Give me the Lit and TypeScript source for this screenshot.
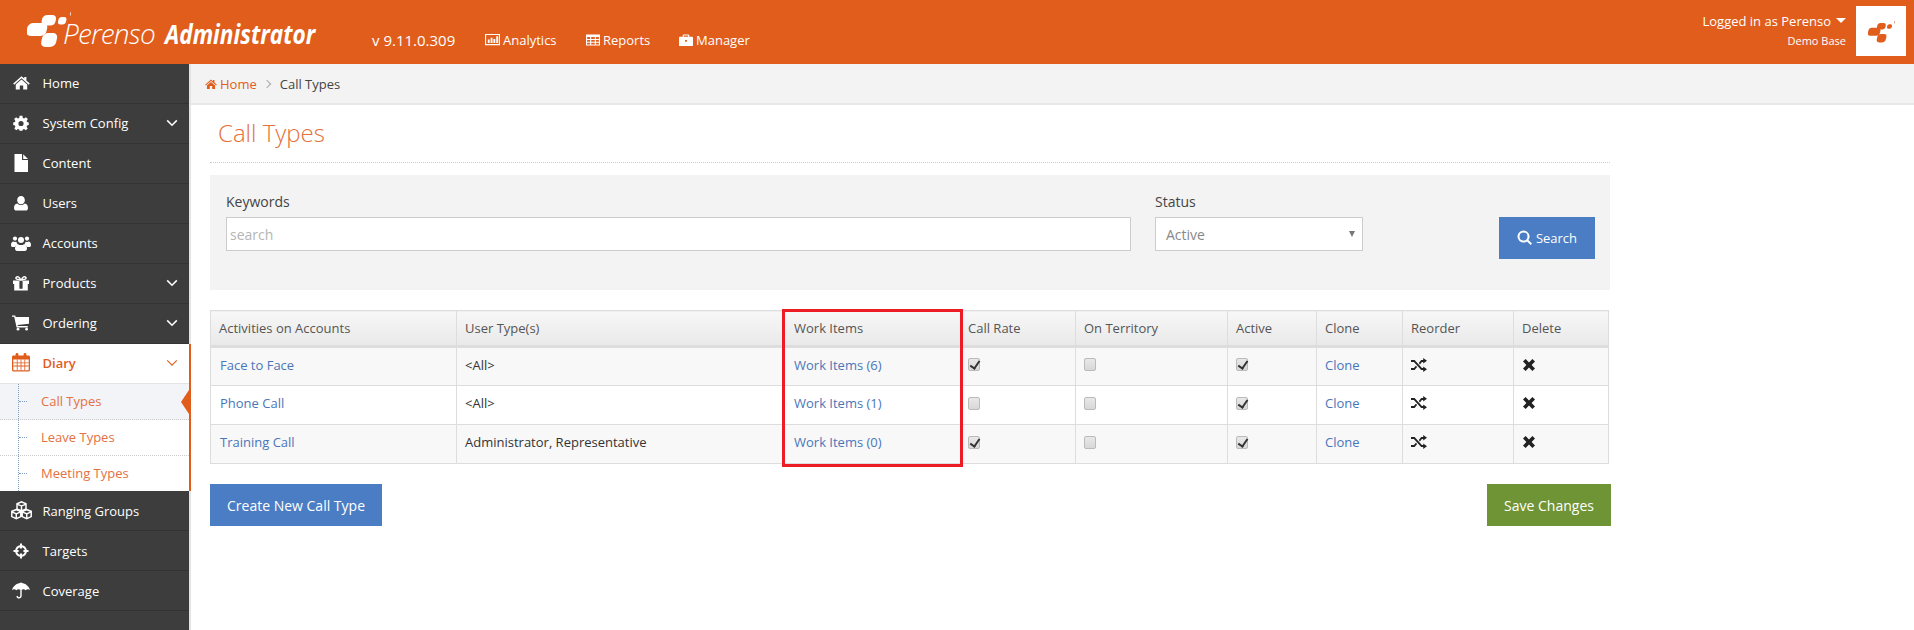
import { LitElement, html, css, svg } from "lit";
import { customElement } from "lit/decorators.js";

const icons: Record<string, any> = {
  home: svg`<path d="M8 2 L10.6 4.3 V2.8 H12.6 V6.1 L15.8 9 L14.9 10 L8 4 L1.1 10 L.2 9 Z"/><path d="M8 5.2 L13.4 9.9 V14.6 H9.6 V10.8 H6.4 V14.6 H2.6 V9.9 Z"/>`,
  cog: svg`<path fill-rule="evenodd" d="M6.6 .8 H9.4 L9.8 2.9 L11.1 3.4 L12.9 2.2 L14.8 4.1 L13.6 5.9 L14.1 7.1 L15.8 7.5 V10 L14.1 10.4 L13.6 11.7 L14.7 13.4 L12.8 15.2 L11.1 14.1 L9.8 14.6 L9.4 15.8 H6.6 L6.2 14.6 L4.9 14.1 L3.2 15.2 L1.3 13.4 L2.4 11.7 L1.9 10.4 L.2 10 V7.5 L1.9 7.1 L2.4 5.9 L1.2 4.1 L3.1 2.2 L4.9 3.4 L6.2 2.9 Z M8 5.9 A2.6 2.6 0 1 0 8 11.1 A2.6 2.6 0 1 0 8 5.9 Z"/>`,
  file: svg`<path d="M1.5 0 H9 V6 H15 V18 H1.5 Z"/><path d="M10.2 .2 L15 5 H10.2 Z"/>`,
  user: svg`<path d="M8 1 C10.4 1 11.8 3 11.8 5.2 C11.8 7.4 10.4 9.2 8 9.2 C5.6 9.2 4.2 7.4 4.2 5.2 C4.2 3 5.6 1 8 1 Z"/><path d="M4.4 8.6 C5.4 9.6 6.6 10.1 8 10.1 C9.4 10.1 10.6 9.6 11.6 8.6 C13.8 8.8 15 10.4 15 13 C15 14.6 14 15.6 12.6 15.6 H3.4 C2 15.6 1 14.6 1 13 C1 10.4 2.2 8.8 4.4 8.6 Z"/>`,
  users: svg`<circle cx="4" cy="3.6" r="2.1"/><circle cx="16" cy="3.6" r="2.1"/><circle cx="10" cy="5" r="3"/><path d="M0 10 C0 7.6 1 6.4 2.6 6.4 C3.4 7 4.4 7.1 5.4 6.8 C5.6 8 6.2 9 7 9.4 C5.4 9.8 4.4 10.7 4 12 H1.4 C.5 12 0 11.2 0 10 Z"/><path d="M20 10 C20 7.6 19 6.4 17.4 6.4 C16.6 7 15.6 7.1 14.6 6.8 C14.4 8 13.8 9 13 9.4 C14.6 9.8 15.6 10.7 16 12 H18.6 C19.5 12 20 11.2 20 10 Z"/><path d="M7 9.2 C8.7 10.4 11.3 10.4 13 9.2 C15 9.4 16 11 16 13.6 C16 15.2 15.1 16 14 16 H6 C4.9 16 4 15.2 4 13.6 C4 11 5 9.4 7 9.2 Z"/>`,
  gift: svg`<path fill-rule="evenodd" d="M0 5.4 H6.2 V3.9 H9.8 V5.4 H16 V9 H14.8 V15.6 H1.2 V9 H0 Z M6.4 9 V13.8 H9.6 V5.8 H6.4 Z"/><path fill-rule="evenodd" d="M4.6 .9 C6 .9 7.2 2.2 8 4 C8.8 2.2 10 .9 11.4 .9 C13 .9 13.8 1.9 13.8 3 C13.8 4.2 12.8 5 11.6 5 H4.4 C3.2 5 2.2 4.2 2.2 3 C2.2 1.9 3 .9 4.6 .9 Z M4.7 2.4 C4 2.4 3.7 2.7 3.7 3.1 C3.7 3.5 4 3.8 4.6 3.8 H6.4 C5.9 3 5.3 2.4 4.7 2.4 Z M11.3 2.4 C10.7 2.4 10.1 3 9.6 3.8 H11.4 C12 3.8 12.3 3.5 12.3 3.1 C12.3 2.7 12 2.4 11.3 2.4 Z"/>`,
  cart: svg`<path d="M0 1.4 H3.2 L3.7 3 H17 V9.8 L5.6 11 L5.8 12 H15.8 V13.4 H4.6 L2.2 2.8 H0 Z"/><circle cx="6" cy="15.2" r="1.4"/><circle cx="14.6" cy="15.2" r="1.4"/>`,
  calendar: svg`<path fill-rule="evenodd" d="M1.5 2.6 H3.6 V1.4 C3.6 .6 4.2 0 5 0 C5.8 0 6.4 .6 6.4 1.4 V2.6 H11.6 V1.4 C11.6 .6 12.2 0 13 0 C13.8 0 14.4 .6 14.4 1.4 V2.6 H16.5 C17.3 2.6 18 3.3 18 4.1 V17 C18 17.8 17.3 18.5 16.5 18.5 H1.5 C.7 18.5 0 17.8 0 17 V4.1 C0 3.3 .7 2.6 1.5 2.6 Z M1.3 6.6 V17.2 H16.7 V6.6 Z"/><path d="M1.3 9.4 H16.7 V10.2 H1.3 Z M1.3 12.6 H16.7 V13.4 H1.3 Z M4.8 6.6 H5.6 V17.2 H4.8 Z M8.6 6.6 H9.4 V17.2 H8.6 Z M12.4 6.6 H13.2 V17.2 H12.4 Z"/>`,
  cubes: svg`<path fill-rule="evenodd" d="M11 0 L16 2 V7.3 L21 9.3 V15.3 L16 17.5 L11 15.3 L6 17.5 L1 15.3 V9.3 L6 7.3 V2 Z M11 1.6 L8 2.8 L11 4 L14 2.8 Z M6 9 L3 10.2 L6 11.4 L9 10.2 Z M16 9 L13 10.2 L16 11.4 L19 10.2 Z M2.4 11.4 V14.5 L5.3 15.7 V12.5 Z M9.6 11.4 L6.7 12.5 V15.7 L9.6 14.5 Z M12.4 11.4 V14.5 L15.3 15.7 V12.5 Z M19.6 11.4 L16.7 12.5 V15.7 L19.6 14.5 Z M7.4 3.9 V7.2 L10.3 8.3 V5 Z M14.6 3.9 L11.7 5 V8.3 L14.6 7.2 Z"/>`,
  target: svg`<path fill-rule="evenodd" d="M7 .5 H9 V2.2 C11.6 2.6 13.4 4.4 13.8 7 H15.5 V9 H13.8 C13.4 11.6 11.6 13.4 9 13.8 V15.5 H7 V13.8 C4.4 13.4 2.6 11.6 2.2 9 H.5 V7 H2.2 C2.6 4.4 4.4 2.6 7 2.2 Z M7 4.2 C5.6 4.6 4.6 5.6 4.2 7 H5.6 V9 H4.2 C4.6 10.4 5.6 11.4 7 11.8 V10.4 H9 V11.8 C10.4 11.4 11.4 10.4 11.8 9 H10.4 V7 H11.8 C11.4 5.6 10.4 4.6 9 4.2 V5.6 H7 Z"/>`,
  umbrella: svg`<path d="M9 0 L9.6 1 C13.6 1.4 16.8 4 18 8 C16.8 7 15 7 13.6 8.2 C12.6 7 10.8 6.8 9.7 7.8 V13.6 C9.7 15.4 8.6 16.6 7 16.6 C5.5 16.6 4.4 15.5 4.4 14 H5.9 C5.9 14.7 6.3 15.2 7 15.2 C7.7 15.2 8.3 14.6 8.3 13.6 V7.8 C7.2 6.8 5.4 7 4.4 8.2 C3 7 1.2 7 0 8 C1.2 4 4.4 1.4 8.4 1 Z"/>`,
  search: svg`<path fill-rule="evenodd" d="M6.5 .5 A6 6 0 0 1 11.4 10 L15 13.6 L13.6 15 L10 11.4 A6 6 0 1 1 6.5 .5 Z M6.5 2.5 A4 4 0 1 0 6.5 10.5 A4 4 0 1 0 6.5 2.5 Z"/>`,
  chart: svg`<path fill-rule="evenodd" d="M0 1 H16 V13 H0 Z M1.2 2.2 V11.8 H14.8 V2.2 Z"/><path d="M3 7 H5 V10.6 H3 Z M6 5 H8 V10.6 H6 Z M9 6.4 H11 V10.6 H9 Z M12 3.4 H14 V10.6 H12 Z"/>`,
  table: svg`<path fill-rule="evenodd" d="M0 1.5 H15 V13.5 H0 Z M1.2 4.4 V6.4 H4.4 V4.4 Z M5.6 4.4 V6.4 H9.4 V4.4 Z M10.6 4.4 V6.4 H13.8 V4.4 Z M1.2 7.6 V9.3 H4.4 V7.6 Z M5.6 7.6 V9.3 H9.4 V7.6 Z M10.6 7.6 V9.3 H13.8 V7.6 Z M1.2 10.5 V12.3 H4.4 V10.5 Z M5.6 10.5 V12.3 H9.4 V10.5 Z M10.6 10.5 V12.3 H13.8 V10.5 Z"/>`,
  briefcase: svg`<path fill-rule="evenodd" d="M5 1.5 H10 C10.6 1.5 11 1.9 11 2.5 V4 H14 C14.6 4 15 4.4 15 5 V13 C15 13.6 14.6 14 14 14 H1 C.4 14 0 13.6 0 13 V5 C0 4.4 .4 4 1 4 H4 V2.5 C4 1.9 4.4 1.5 5 1.5 Z M5.2 2.7 V4 H9.8 V2.7 Z M6.5 7.5 V9.5 H8.5 V7.5 Z"/>`,
  random: svg`<path d="M12.2 1 L16 3.8 L12.2 6.6 V4.9 H10.9 L8.9 7.4 L7.8 6 L10.2 3 H12.2 Z"/><path d="M0 3 H3.6 L10.9 11.1 H12.2 V9.4 L16 12.2 L12.2 15 V13 H10.2 L2.9 4.9 H0 Z"/><path d="M0 11.1 H2.9 L4.9 8.7 L6.1 10.1 L3.6 13 H0 Z"/>`,
  times: svg`<path d="M3.6 1 L7 4.4 L10.4 1 L13 3.6 L9.6 7 L13 10.4 L10.4 13 L7 9.6 L3.6 13 L1 10.4 L4.4 7 L1 3.6 Z"/>`,
  chevron: svg`<path d="M1.2 3.4 L6 8.2 L10.8 3.4" fill="none" stroke="currentColor" stroke-width="1.5"/>`,
};

const icon = (name: string, w: number, h: number, cls = "") => {
  const boxes: Record<string, string> = {
    file: "0 0 16 18", users: "0 0 20 16", cubes: "0 0 22 18", cart: "0 0 18 17",
    calendar: "0 0 18 19", umbrella: "0 0 18 17", times: "0 0 14 14", chevron: "0 0 12 12",
    table: "0 0 15 15", briefcase: "0 0 15 15",
  };
  return html`<svg class="ic ${cls}" width=${w} height=${h} viewBox=${boxes[name] ?? "0 0 16 16"} fill="currentColor" aria-hidden="true">${icons[name]}</svg>`;
};

const logoMark = svg`
  <g transform="skewX(-12)">
    <rect x="4" y="13" width="20" height="13" rx="5"/>
    <rect x="17" y="5" width="14" height="10.5" rx="4.5"/>
    <rect x="33.5" y="7" width="8" height="7.5" rx="3"/>
    <rect x="44" y=".5" width="5.5" height="5.5" rx="2.7"/>
    <rect x="21" y="23" width="15" height="14" rx="5"/>
  </g>`;

type Nav = { label: string; ic: string; w: number; h: number; chev?: boolean };
const navTop: Nav[] = [
  { label: "Home", ic: "home", w: 17, h: 17 },
  { label: "System Config", ic: "cog", w: 16, h: 16, chev: true },
  { label: "Content", ic: "file", w: 16, h: 18 },
  { label: "Users", ic: "user", w: 16, h: 16 },
  { label: "Accounts", ic: "users", w: 20, h: 16 },
  { label: "Products", ic: "gift", w: 16, h: 16, chev: true },
  { label: "Ordering", ic: "cart", w: 18, h: 17, chev: true },
];
const navBottom: Nav[] = [
  { label: "Ranging Groups", ic: "cubes", w: 23, h: 19 },
  { label: "Targets", ic: "target", w: 16, h: 16 },
  { label: "Coverage", ic: "umbrella", w: 18, h: 17 },
];
const rows = [
  { name: "Face to Face", users: "<All>", items: 6, rate: true, terr: false, active: true },
  { name: "Phone Call", users: "<All>", items: 1, rate: false, terr: false, active: true },
  { name: "Training Call", users: "Administrator, Representative", items: 0, rate: true, terr: false, active: true },
];

@customElement("app-root")
export class AppRoot extends LitElement {
  static styles = css`
    :host { display: block; font-family: "Open Sans", sans-serif; font-size: 13px; color: #333; min-height: 630px; background: #fff; }
    * { box-sizing: border-box; }
    .ic { display: block; flex: none; }
    a { color: #4a76b8; text-decoration: none; }
    header { height: 64px; background: #e05d1c; color: #fff; display: flex; align-items: stretch; }
    .brand { width: 372px; flex: none; position: relative; display: flex; align-items: flex-start; padding: 10px 0 0 27px; }
    .brand .mark { flex: none; }
    .brand-text { display: flex; align-items: baseline; margin: 6px 0 0 -8px; white-space: nowrap; }
    .perenso { font-size: 28px; font-weight: 300; font-style: italic; letter-spacing: -0.8px; line-height: 34px; }
    .admin { font-size: 26px; font-weight: 700; font-style: italic; line-height: 34px; margin-left: 10px; display: inline-block; transform: scaleX(.87); transform-origin: left center; }
    .topnav { display: flex; align-items: center; padding-top: 16px; height: 64px; }
    .ver { font-size: 15px; width: 113px; }
    .tn { display: flex; align-items: center; gap: 3px; color: #fff; font-size: 13px; }
    .tn.analytics { width: 101px; }
    .tn.reports { width: 93px; }
    .user { margin-left: auto; display: flex; align-items: flex-start; padding: 6px 8px 0 0; }
    .who { text-align: right; padding: 7px 10px 0 0; }
    .who .l1 { display: flex; align-items: center; justify-content: flex-end; gap: 5px; line-height: 16px; font-size: 13px; }
    .caret { width: 0; height: 0; border-left: 5px solid transparent; border-right: 5px solid transparent; border-top: 5px solid #fff; margin-bottom: 2px; }
    .who .l2 { font-size: 11px; line-height: 15px; margin-top: 4px; }
    .avatar { width: 50px; height: 50px; background: #fff; color: #e05d1c; display: flex; align-items: center; justify-content: center; }

    .body { display: flex; min-height: 566px; }
    aside { width: 191px; flex: none; background: #3d3d3d; border-right: 2px solid #e4e4e4; }
    .item { height: 40px; display: flex; align-items: center; color: #fff; border-bottom: 1px solid #333; position: relative; }
    .item.up { padding-bottom: 2px; }
    .item .slot { width: 42.5px; flex: none; display: flex; justify-content: center; }
    .item .chev { margin-left: auto; margin-right: 11px; }
    .diary { background: #fff; border-right: 2px solid #e05d1c; margin-right: -2px; }
    .diary .item { color: #e05d1c; font-weight: 600; border-bottom: 1px solid #e4e4e4; background: #fff; }
    .diary .chev path { stroke-width: 1.1; }
    .sub-item { height: 36px; display: flex; align-items: center; padding: 0 0 2px 41px; color: #e5703f; border-bottom: 1px dotted #ccc; position: relative; }
    .sub-item:last-child { border-bottom: 0; height: 35px; }
    .sub-item.on { background: #f3f4f8; }
    .sub-item::before { content: ""; position: absolute; left: 19px; top: 17px; width: 8px; border-top: 1px dotted #7f9fc4; }
    .sub-item::after { content: ""; position: absolute; left: 18px; top: 0; bottom: 0; border-left: 1px dotted #7f9fc4; }
    .sub-item.on .arrow { position: absolute; right: 0; top: 6px; width: 0; height: 0; border-top: 12px solid transparent; border-bottom: 12px solid transparent; border-right: 8px solid #e05d1c; }

    main { flex: 1; min-width: 0; }
    .crumbs { height: 41px; background: #f3f3f3; border-bottom: 2px solid #e8e8e8; display: flex; align-items: center; padding-left: 14px; font-size: 13px; }
    .crumbs a { color: #e05d1c; display: flex; align-items: center; gap: 3px; }
    .crumbs .sep { width: 6px; height: 6px; border-top: 1px solid #aaa; border-right: 1px solid #aaa; transform: rotate(45deg); margin: 0 10px 0 7px; }
    .crumbs .cur { color: #444; }
    .content { width: 1400px; margin-left: 19px; }
    h1 { margin: 0; font-size: 24px; font-weight: 300; color: #e4703c; line-height: 32px; height: 58px; padding: 12px 0 0 8px; border-bottom: 1px dotted #ccc; }
    .panel { margin-top: 12px; height: 115px; background: #f3f3f3; display: flex; padding: 0 15px 0 16px; }
    .field { display: flex; flex-direction: column; padding-top: 16px; }
    .field label { line-height: 22px; height: 26px; font-size: 14px; color: #444; }
    .kw { width: 905px; }
    .st { width: 208px; margin-left: 24px; }
    .box { height: 34px; border: 1px solid #ccc; background: #fff; display: flex; align-items: center; font-size: 14px; }
    .kw .box { padding-left: 3px; color: #b5b5b5; }
    .st .box { padding: 0 7px 0 10px; color: #888; justify-content: space-between; }
    .tri { border-left: 3px solid transparent; border-right: 3px solid transparent; border-top: 6px solid #777; }
    .btn { display: flex; align-items: center; justify-content: center; color: #fff; font-size: 14px; }
    .blue { background: #4a7dc3; }
    .search { width: 96px; height: 42px; margin: 42px 0 0 auto; gap: 3px; font-size: 13px; }

    .tablewrap { position: relative; margin-top: 20px; width: 1399px; }
    table { width: 100%; border-collapse: collapse; table-layout: fixed; font-size: 13px; }
    th, td { border: 1px solid #ddd; text-align: left; padding: 0 0 0 8px; }
    th:nth-child(3), td:nth-child(3) { padding-left: 11px; }
    th:nth-child(4), td:nth-child(4) { padding-left: 5px; }
    td:nth-child(1) { padding-left: 9px; }
    thead th { height: 36px; font-weight: 500; color: #555; background: linear-gradient(#f7f7f7, #e9e9e9); border-bottom: 3px solid #ddd; }
    td { height: 39px; color: #333; padding-bottom: 4px; }
    tbody tr:nth-child(odd) td { background: #f8f8f8; }
    .c1 { width: 246px; } .c2 { width: 326px; } .c3 { width: 180px; } .c4 { width: 113px; }
    .c5 { width: 152px; } .c6 { width: 89px; } .c7 { width: 86px; } .c8 { width: 111px; }
    .chk { display: block; width: 12px; height: 13px; border: 1px solid #bbb; border-radius: 2px; background: linear-gradient(#e8e8e8, #d8d8d8); position: relative; }
    .chk.on::after { content: ""; position: absolute; left: 3px; top: 0; width: 4px; height: 8px; border: solid #333; border-width: 0 2px 2px 0; transform: rotate(35deg); }
    .act { color: #222; }
    .red { position: absolute; left: 572px; top: -1px; width: 181px; height: 158px; border: 3px solid #ed1c24; pointer-events: none; }

    .actions { display: flex; justify-content: space-between; margin-top: 20px; width: 1400px; }
    .create { width: 172px; height: 42px; }
    .save { width: 124px; height: 42px; background: #6f9436; margin-right: -1px; }
  `;

  private navItem(n: Nav, up: boolean) {
    return html`<div class="item ${up ? "up" : ""}">
      <span class="slot">${icon(n.ic, n.w, n.h)}</span>${n.label}
      ${n.chev ? html`<span class="chev">${icon("chevron", 12, 12)}</span>` : ""}
    </div>`;
  }

  render() {
    return html`
      <header>
        <div class="brand">
          <svg class="mark" width="44" height="38" viewBox="0 0 44 38" fill="currentColor" aria-hidden="true">${logoMark}</svg>
          <div class="brand-text"><span class="perenso">Perenso</span><span class="admin">Administrator</span></div>
        </div>
        <div class="topnav">
          <span class="ver">v 9.11.0.309</span>
          <span class="tn analytics">${icon("chart", 15, 15)}Analytics</span>
          <span class="tn reports">${icon("table", 14, 14)}Reports</span>
          <span class="tn">${icon("briefcase", 14, 14)}Manager</span>
        </div>
        <div class="user">
          <div class="who">
            <div class="l1">Logged in as Perenso <span class="caret"></span></div>
            <div class="l2">Demo Base</div>
          </div>
          <div class="avatar"><svg width="27" height="23" viewBox="0 0 44 38" fill="currentColor" aria-hidden="true">${logoMark}</svg></div>
        </div>
      </header>
      <div class="body">
        <aside>
          ${navTop.map((n) => this.navItem(n, true))}
          <div class="diary">
            <div class="item up">
              <span class="slot">${icon("calendar", 18, 19)}</span>Diary
              <span class="chev">${icon("chevron", 12, 12)}</span>
            </div>
            <div class="sub">
              <div class="sub-item on">Call Types<span class="arrow"></span></div>
              <div class="sub-item">Leave Types</div>
              <div class="sub-item">Meeting Types</div>
            </div>
          </div>
          ${navBottom.map((n) => this.navItem(n, false))}
        </aside>
        <main>
          <div class="crumbs">
            <a href="#">${icon("home", 12, 12)}Home</a><span class="sep"></span><span class="cur">Call Types</span>
          </div>
          <div class="content">
            <h1>Call Types</h1>
            <div class="panel">
              <div class="field kw"><label>Keywords</label><div class="box">search</div></div>
              <div class="field st"><label>Status</label><div class="box">Active<span class="tri"></span></div></div>
              <div class="btn blue search">${icon("search", 16, 16)}Search</div>
            </div>
            <div class="tablewrap">
              <table>
                <colgroup><col class="c1" /><col class="c2" /><col class="c3" /><col class="c4" /><col class="c5" /><col class="c6" /><col class="c7" /><col class="c8" /><col /></colgroup>
                <thead><tr>
                  <th>Activities on Accounts</th><th>User Type(s)</th><th>Work Items</th><th>Call Rate</th><th>On Territory</th><th>Active</th><th>Clone</th><th>Reorder</th><th>Delete</th>
                </tr></thead>
                <tbody>
                  ${rows.map((r) => html`<tr>
                    <td><a href="#">${r.name}</a></td>
                    <td>${r.users}</td>
                    <td><a href="#">Work Items (${r.items})</a></td>
                    <td><span class="chk ${r.rate ? "on" : ""}"></span></td>
                    <td><span class="chk ${r.terr ? "on" : ""}"></span></td>
                    <td><span class="chk ${r.active ? "on" : ""}"></span></td>
                    <td><a href="#">Clone</a></td>
                    <td class="act">${icon("random", 16, 16)}</td>
                    <td class="act">${icon("times", 14, 14)}</td>
                  </tr>`)}
                </tbody>
              </table>
              <div class="red"></div>
            </div>
            <div class="actions">
              <div class="btn blue create">Create New Call Type</div>
              <div class="btn save">Save Changes</div>
            </div>
          </div>
        </main>
      </div>
    `;
  }
}
